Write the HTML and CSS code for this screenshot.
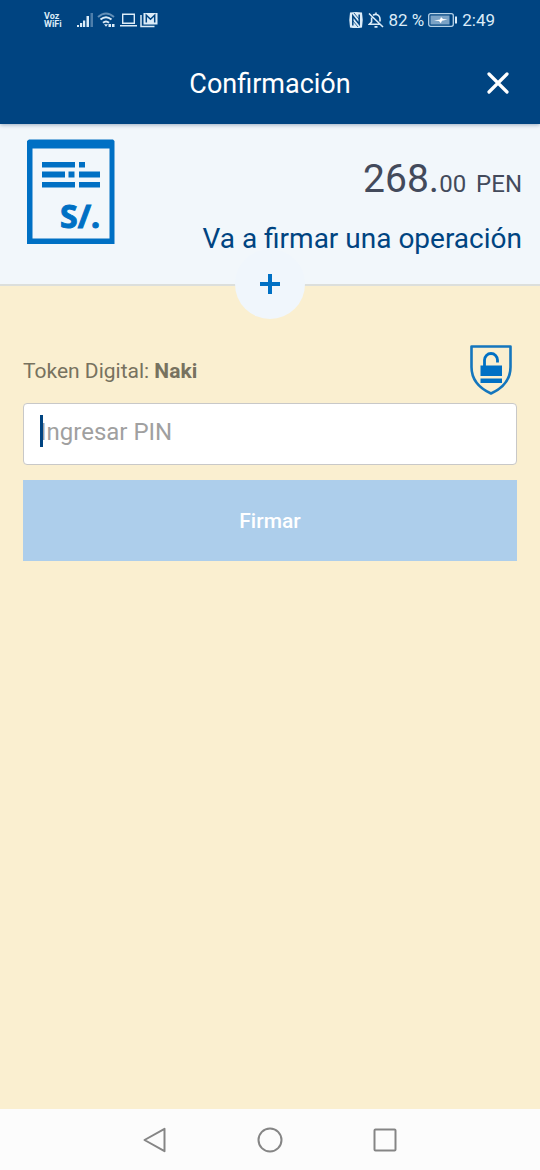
FILE: index.html
```html
<!DOCTYPE html>
<html lang="es">
<head>
<meta charset="utf-8">
<meta name="viewport" content="width=device-width, initial-scale=1">
<title>Confirmación</title>
<link rel="stylesheet" href="styles.css">
</head>
<body>
<div class="app">
  <header class="top">
    <div class="status">
      <div class="status-left">
        <span class="carrier">Voz<br>WiFi</span>
        <svg width="17" height="18" viewBox="0 0 17 18" fill="#dcecf8"><path d="M0 14h2v2H0zM3 12h2.200v4H3zM6 9.500h2.200V16H6zM9.500 5h2.500v11H9.500z"/><path d="M13.500 2H16v14h-2.500z" opacity=".35"/></svg>
        <svg width="20" height="18" viewBox="0 0 20 18" fill="none" stroke="#dcecf8" stroke-width="2"><path d="M1 6Q9 -1 17 6" opacity=".45"/><path d="M3.500 8.500Q9 4 14.500 8.500M6 11.800Q9 9.300 12 11.800"/><path d="M7 13.300h4L9 15.800z" fill="#dcecf8" stroke="none"/><path d="M11.500 14.500h2.500M15 14.500h2.500" stroke-width="2.800"/></svg>
        <svg width="17" height="18" viewBox="0 0 17 18" fill="none" stroke="#dcecf8" stroke-width="1.400"><path d="M2.700 3.200h11.600v9H2.700zM0 14.800h17"/></svg>
        <svg width="18" height="18" viewBox="0 0 18 18"><path d="M1 4v11.500h13.500" fill="none" stroke="#dcecf8" stroke-width="1.500"/><path d="M3.500 2h14v11.500h-14z" fill="#dcecf8"/><path d="M6.300 11.500V4.200l4.200 4 4.200-4v7.300" fill="none" stroke="#004481" stroke-width="1.500"/></svg>
      </div>
      <div class="status-right">
        <svg width="16" height="18" viewBox="0 0 16 18"><path d="M2 1.500Q8 .5 14 1.500Q15.500 9 14 16.500Q8 17.500 2 16.500Q.5 9 2 1.500z" fill="#dcecf8"/><path d="M4.800 14.500V5l6.400 8V3.500" fill="none" stroke="#004481" stroke-width="1.500"/><path d="M6 2L11 8M5 10L10 16" fill="none" stroke="#004481" stroke-width=".8"/></svg>
        <svg width="16" height="18" viewBox="0 0 16 18" fill="none" stroke="#dcecf8" stroke-width="1.600"><path d="M1 2.500L15 16M5 4.200Q8 2.400 10.700 4.700Q12 6 12 8v2.500M3.600 6.500V11l-2.200 2.300h10.500M6.500 15.900h3M8 3.500V1.500"/></svg>
        <span class="percent">82 %</span>
        <svg width="30" height="18" viewBox="0 0 30 18"><rect x=".7" y="2.700" width="24.600" height="12.600" rx="2" fill="none" stroke="#b5d2e8" stroke-width="1.300"/><path d="M2.500 4.500h19v9h-19z" fill="#7ba3c6"/><path d="M6 9.500l6-1 1-2.500 2 2 4.500.6-5.500 1.200-1.200 2.400-1.800-2.200z" fill="#fff"/><path d="M27 5.500h2v7h-2z" fill="#dcecf8"/></svg>
        <span class="time">2:49</span>
      </div>
    </div>
    <div class="titlebar">
      <h1 class="title">Confirmación</h1>
      <button class="close" type="button" aria-label="Cerrar">
        <svg width="24" height="24" viewBox="0 0 24 24"><path d="M3 2L21 20M21 2L3 20" stroke="#fff" stroke-width="3.200" stroke-linecap="round"/></svg>
      </button>
    </div>
  </header>

  <section class="summary">
    <svg class="doc" width="88" height="106" viewBox="0 0 88 106" fill="#0070c4">
      <path fill-rule="evenodd" d="M2 0.500H86L87.500 2V105H0V2zM5.500 9.500V99.500H82.500V9.500z"/>
      <path d="M15 23h33v5.500H15zM52 23h6v5.500h-6zM15 32.500h23v6H15zM41.500 32.500h6v6h-6zM52 32.500h21v6H52zM15 43h33v5.500H15zM52 43h21v5.500H52z"/>
      <text class="doc-text" x="33" y="89">S/.</text>
    </svg>
    <div class="summary-text">
      <p class="amount">268.<span class="cents">00 <span class="currency">PEN</span></span></p>
      <p class="operation">Va a firmar una operación</p>
    </div>
    <button class="expand" type="button" aria-label="Ver más">
      <svg width="20" height="20" viewBox="0 0 20 20"><path d="M10 0v20M0 10h20" stroke="#0070c4" stroke-width="4"/></svg>
    </button>
  </section>

  <main class="sign">
    <div class="token">
      <label class="token-label" for="pin">Token Digital: <b>Naki</b></label>
      <svg width="42" height="50" viewBox="0 0 42 50"><path d="M1.500 1.500H40.500V22C40.500 36 32 43.500 21 48.500C10 43.500 1.500 36 1.500 22z" fill="none" stroke="#1476bd" stroke-width="2.600" stroke-linejoin="round"/><path d="M10.500 20.500h21.500v10.500H10.500zM10.500 33.500h21.500v4.500H10.500z" fill="#0070c4"/><path d="M14.500 21V15a6.500 6.500 0 0 1 13 0v2.500" fill="none" stroke="#0070c4" stroke-width="2.800"/></svg>
    </div>
    <div class="field">
      <input class="pin" id="pin" type="text" inputmode="numeric" placeholder="Ingresar PIN">
      <span class="caret"></span>
    </div>
    <button class="submit" type="button">Firmar</button>
  </main>

  <nav class="nav">
    <button type="button" aria-label="Atrás"><svg width="26" height="28" viewBox="0 0 26 28"><path d="M2.500 14L22.500 2.800V25.200z"/></svg></button>
    <button type="button" aria-label="Inicio"><svg width="26" height="28" viewBox="0 0 26 28"><circle cx="13" cy="14" r="11.500"/></svg></button>
    <button type="button" aria-label="Recientes"><svg width="26" height="28" viewBox="0 0 26 28"><rect x="2.500" y="3.500" width="21" height="21" rx="1"/></svg></button>
  </nav>
</div>
</body>
</html>
```
FILE: styles.css
```css
* { box-sizing: border-box; }
body, h1, p { margin: 0; }
body { font-family: Roboto, "Liberation Sans", sans-serif; background: #faefd0; }
button { padding: 0; border: 0; background: none; font: inherit; cursor: pointer; }
svg { display: block; flex: none; }

.app { min-height: 100vh; display: flex; flex-direction: column; }

.top { background: #004481; color: #fff; box-shadow: 0 1px 4px rgba(0, 40, 90, .35); z-index: 1; }
.status { display: flex; justify-content: space-between; align-items: center; height: 40px; padding: 0 45px 0 44px; color: #dcecf8; }
.status-left { display: flex; align-items: center; gap: 3px; }
.status-right { display: flex; align-items: center; gap: 4px; }
.carrier { font-size: 9px; line-height: 8px; font-weight: 700; margin-right: 12px; }
.percent, .time { font-size: 17px; line-height: 20px; }

.titlebar { display: grid; grid-template-columns: 1fr auto 1fr; align-items: center; height: 84px; padding: 3px 30px 0; }
.title { grid-column: 2; font-size: 27px; line-height: 32px; font-weight: 400; }
.close { justify-self: end; }

.summary { position: relative; display: flex; justify-content: space-between; padding: 15px 18px 29px 27px; background: #f2f7fb; border-bottom: 2px solid #dcdfdc; }
.doc-text { font-family: "Noto Sans", sans-serif; font-size: 32px; font-weight: 700; stroke: #0070c4; stroke-width: 1px; }
.summary-text { display: flex; flex-direction: column; gap: 20px; padding-top: 16px; text-align: right; }
.amount { font-size: 39px; line-height: 48px; color: #434a5b; }
.cents { font-size: 24px; line-height: 24px; }
.currency { margin-left: 4px; }
.operation { font-size: 28px; line-height: 32px; color: #004481; }
.expand { position: absolute; left: 50%; bottom: -35px; width: 70px; height: 70px; transform: translateX(-50%); border-radius: 50%; background: #f0f6fc; display: grid; place-items: center; }

.sign { flex: 1; padding: 59px 23px 0; }
.token { display: flex; justify-content: space-between; align-items: center; padding-right: 5px; margin-bottom: 8px; }
.token-label { font-size: 21px; line-height: 24px; padding-top: 2px; color: #77725f; }
.field { position: relative; margin-bottom: 15px; }
.pin { display: block; width: 100%; height: 62px; padding: 0 16px 4px; border: 1px solid #c8c8c8; border-radius: 4px; background: #fff; font: inherit; font-size: 24px; color: #004481; outline: none; }
.pin::placeholder { color: #a0a0a0; opacity: 1; }
.caret { position: absolute; left: 17px; top: 12px; width: 3px; height: 32px; background: #004481; }
.submit { display: block; width: 100%; height: 81px; background: #adceeb; color: #fff; font-size: 21px; font-weight: 500; }

.nav { display: flex; justify-content: center; align-items: center; gap: 89px; height: 61px; background: #fcfcfc; }
.nav svg { fill: none; stroke: #858585; stroke-width: 2; stroke-linejoin: round; }
```
